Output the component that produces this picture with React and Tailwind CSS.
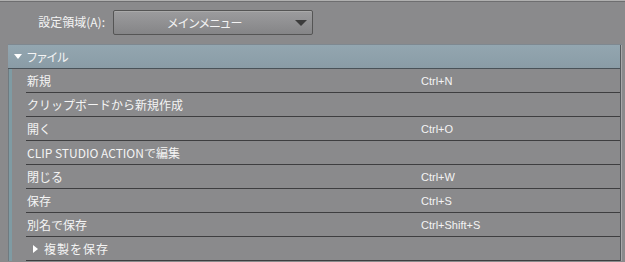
import React from 'react';

const rows = [
  { label: '新規', key: 'Ctrl+N' },
  { label: 'クリップボードから新規作成', key: '' },
  { label: '開く', key: 'Ctrl+O' },
  { label: 'CLIP STUDIO ACTIONで編集', key: '' },
  { label: '閉じる', key: 'Ctrl+W' },
  { label: '保存', key: 'Ctrl+S' },
  { label: '別名で保存', key: 'Ctrl+Shift+S' },
  { label: '複製を保存', key: '', sub: true },
];

const jp = { fontFamily: '"Noto Sans CJK JP", "Liberation Sans", sans-serif' };

export default function App() {
  return (
    <div className="h-[262px] w-[625px] overflow-hidden bg-[#8a8a8c] text-[12px] text-[#f4f4f4]" style={jp}>
      <div className="h-px bg-[#b0b0b0]" />
      <div className="h-px bg-[#6e6e70]" />

      <div className="flex h-[40px] items-start pt-[8px]">
        <div className="w-[113px] pr-[8px] pt-[4px] text-right leading-[16px]">設定領域(A):</div>
        <div className="relative flex h-[25px] w-[200px] items-center justify-center rounded-[2px] border border-[#555] bg-gradient-to-b from-[#9c9c9e] to-[#858587] pr-[16px] shadow-[inset_0_1px_0_#aaa]">
          <span className="leading-none [font-feature-settings:'palt']">メインメニュー</span>
          <span className="absolute right-[5px] top-[9px] h-0 w-0 border-x-[6px] border-t-[6px] border-x-transparent border-t-[#3c3c3c]" />
        </div>
      </div>

      <div className="ml-[8px] mt-[2px] h-px w-[614px] bg-[#7e8890]" />
      <div className="flex pl-[8px]">
        <div className="flex w-[614px] flex-col">
          <div className="flex h-[24px] items-center border-b border-[#4a5258] bg-gradient-to-b from-[#93a6b0] to-[#8a9ca6] pl-[6px]">
            <span className="mr-[5px] h-0 w-0 border-x-[4px] border-t-[5px] border-x-transparent border-t-white" />
            <span className="[font-feature-settings:'palt']">ファイル</span>
          </div>
          <div className="flex">
            <div className="flex w-[18px]">
              <div className="w-px bg-[#6f7a80]" />
              <div className="w-[3px] bg-[#7f9ba3]" />
              <div className="flex-1" />
            </div>
            <div className="flex flex-1 flex-col">
              {rows.map((r) => (
                <div key={r.label} className="flex h-[24px] items-center border-b border-[#3e3e40] pt-px">
                  <div className="flex w-[395px] items-center pl-px">
                    {r.sub && (
                      <span className="ml-[6px] mr-[6px] h-0 w-0 border-y-[4px] border-l-[5px] border-y-transparent border-l-white" />
                    )}
                    <span className={r.sub ? 'tracking-[1px]' : ''}>{r.label}</span>
                  </div>
                  <span className="text-[11px]" style={{ fontFamily: '"Liberation Sans", Arial, sans-serif' }}>{r.key}</span>
                </div>
              ))}
            </div>
          </div>
        </div>
        <div className="ml-[-2px] w-px bg-[#55595c]" />
        <div className="w-px bg-[#a8a8aa]" />
      </div>
    </div>
  );
}
